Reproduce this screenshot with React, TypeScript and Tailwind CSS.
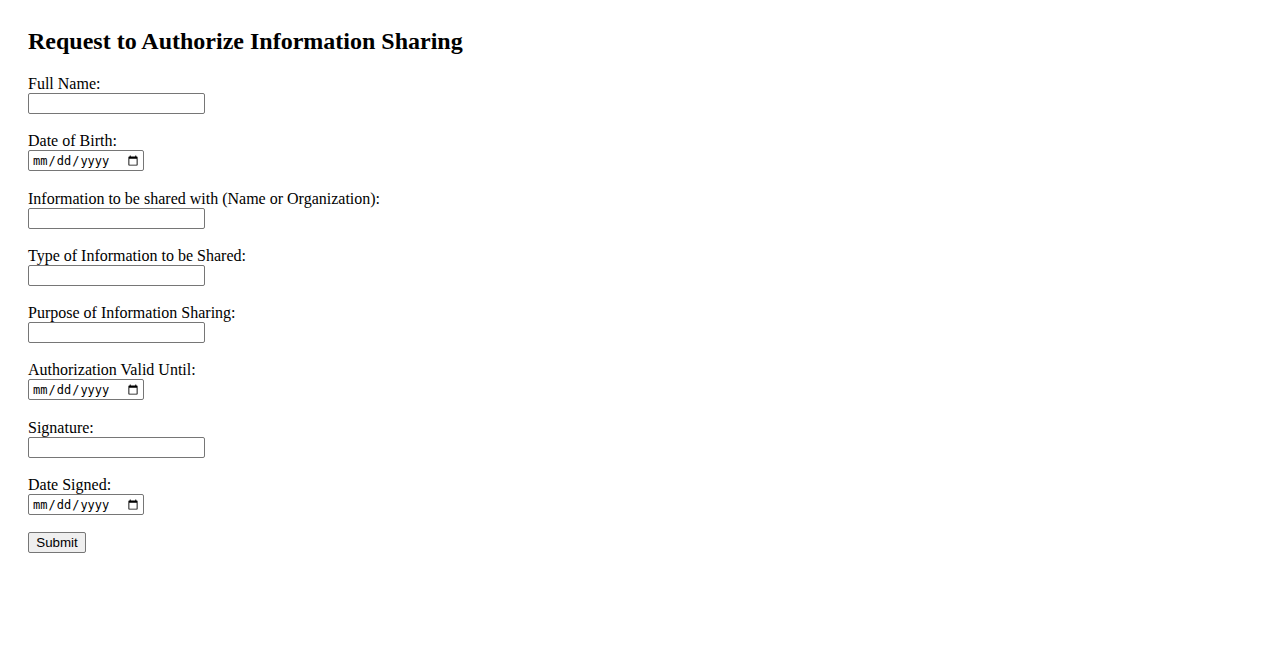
import React from "react";

const serif = { fontFamily: '"Liberation Serif", "Times New Roman", serif' };

function TextField({ label }: { label: string }) {
  return (
    <div className="mb-[18px]">
      <label className="block leading-[18px] text-[16px] text-black">{label}</label>
      <input
        type="text"
        className="block w-[177px] h-[21px] border border-[#767676] rounded-[2px] bg-white px-[2px] py-[1px] text-[13.33px] outline-none"
        style={{ fontFamily: '"Liberation Sans", Arial, sans-serif' }}
      />
    </div>
  );
}

function DateField({ label }: { label: string }) {
  return (
    <div className="mb-[19px]">
      <label className="block leading-[18px] text-[16px] text-black">{label}</label>
      <input
        type="date"
        className="block w-[116px] h-[21px] border border-[#767676] rounded-[2px] bg-white pl-[3px] pr-[2px] py-0 text-[12px] text-black outline-none"
        style={{ fontFamily: '"DejaVu Sans Mono", "Liberation Mono", monospace' }}
      />
    </div>
  );
}

export default function App() {
  return (
    <div className="min-h-[650px] bg-white px-[28px] pt-[27px] text-black" style={serif}>
      <h2 className="text-[24px] font-bold leading-[28px] mb-[20px]">
        Request to Authorize Information Sharing
      </h2>
      <form onSubmit={(e) => e.preventDefault()}>
        <TextField label="Full Name:" />
        <DateField label="Date of Birth:" />
        <TextField label="Information to be shared with (Name or Organization):" />
        <TextField label="Type of Information to be Shared:" />
        <TextField label="Purpose of Information Sharing:" />
        <DateField label="Authorization Valid Until:" />
        <TextField label="Signature:" />
        <DateField label="Date Signed:" />
        <button
          type="submit"
          className="-mt-[2px] block h-[21px] w-[58px] border border-[#767676] rounded-[2px] bg-[#efefef] text-[13.33px] leading-[17px] text-black"
          style={{ fontFamily: '"Liberation Sans", Arial, sans-serif' }}
        >
          Submit
        </button>
      </form>
    </div>
  );
}
